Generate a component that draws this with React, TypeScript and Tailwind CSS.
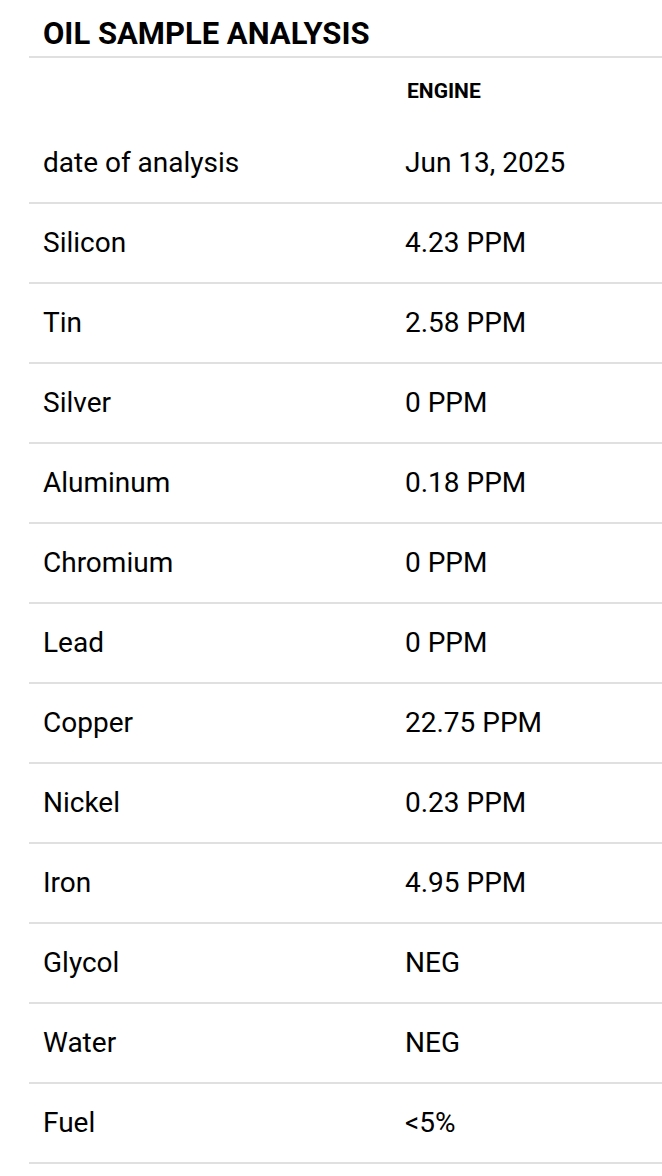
import React from 'react';

interface Reading {
  label: string;
  value: string;
}

const readings: Reading[] = [
  { label: 'Silicon', value: '4.23 PPM' },
  { label: 'Tin', value: '2.58 PPM' },
  { label: 'Silver', value: '0 PPM' },
  { label: 'Aluminum', value: '0.18 PPM' },
  { label: 'Chromium', value: '0 PPM' },
  { label: 'Lead', value: '0 PPM' },
  { label: 'Copper', value: '22.75 PPM' },
  { label: 'Nickel', value: '0.23 PPM' },
  { label: 'Iron', value: '4.95 PPM' },
  { label: 'Glycol', value: 'NEG' },
  { label: 'Water', value: 'NEG' },
  { label: 'Fuel', value: '<5%' },
];

const Row: React.FC<{ label: string; value: string }> = ({ label, value }) => (
  <div className="flex items-center h-[78px] border-b-2 border-[#e0e0e0] box-content">
    <div className="w-[362px] pl-[14px] text-[28px] leading-[34px] text-black">{label}</div>
    <div className="flex-1 pl-[14px] text-[28px] leading-[34px] text-black">{value}</div>
  </div>
);

export default function App() {
  return (
    <div className="min-h-[1176px] bg-white" style={{ fontFamily: 'Roboto, "Liberation Sans", sans-serif' }}>
      <div className="ml-[29px]">
        {/* Title */}
        <div className="border-b-2 border-[#e0e0e0] pt-[16px] pb-[4px] pl-[14px]">
          <h1 className="text-[31px] leading-[36px] font-bold text-black">OIL SAMPLE ANALYSIS</h1>
        </div>

        {/* Column header */}
        <div className="flex items-center h-[66px]">
          <div className="w-[362px]" />
          <div className="flex-1 pl-[16px] text-[21px] leading-[26px] font-bold text-black">ENGINE</div>
        </div>

        <Row label="date of analysis" value="Jun 13, 2025" />

        {readings.map((r) => (
          <Row key={r.label} label={r.label} value={r.value} />
        ))}
      </div>
    </div>
  );
}
